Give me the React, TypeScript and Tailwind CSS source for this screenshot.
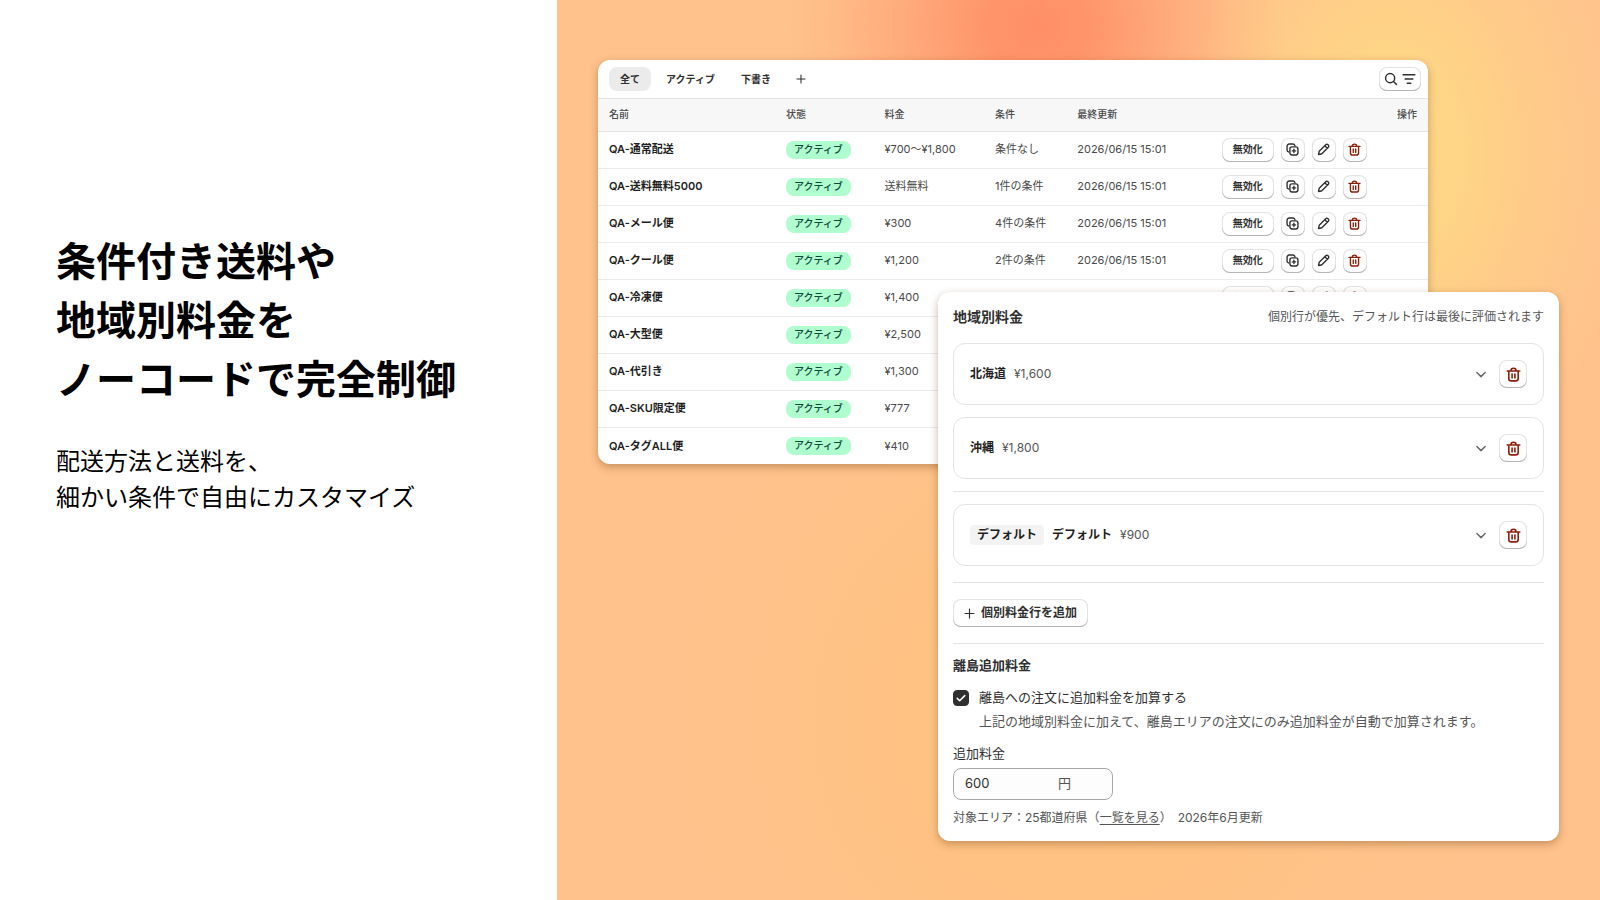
import { useState } from 'react';
import type { ReactNode } from 'react';

type Method = { name: string; rate: string; condition?: string; updated?: string };

const METHODS: Method[] = [
  { name: 'QA-通常配送', rate: '¥700〜¥1,800', condition: '条件なし', updated: '2026/06/15 15:01' },
  { name: 'QA-送料無料5000', rate: '送料無料', condition: '1件の条件', updated: '2026/06/15 15:01' },
  { name: 'QA-メール便', rate: '¥300', condition: '4件の条件', updated: '2026/06/15 15:01' },
  { name: 'QA-クール便', rate: '¥1,200', condition: '2件の条件', updated: '2026/06/15 15:01' },
  { name: 'QA-冷凍便', rate: '¥1,400' },
  { name: 'QA-大型便', rate: '¥2,500' },
  { name: 'QA-代引き', rate: '¥1,300' },
  { name: 'QA-SKU限定便', rate: '¥777' },
  { name: 'QA-タグALL便', rate: '¥410' },
];

const TABS = ['全て', 'アクティブ', '下書き'];

function Icon({ className, children }: { className: string; children: ReactNode }) {
  return (
    <svg viewBox="0 0 16 16" fill="none" stroke="currentColor" strokeWidth="1.7" strokeLinecap="round" strokeLinejoin="round" className={className} aria-hidden="true">
      {children}
    </svg>
  );
}

function TrashIcon({ className }: { className: string }) {
  return (
    <Icon className={className}>
      <path d="M1.3 4.2h13.4M5.2 4.200a2.800 2.800 0 0 1 5.600 0M3 4.200v8a2.600 2.600 0 0 0 2.600 2.600h4.800a2.600 2.600 0 0 0 2.600-2.600v-8M6.500 7.400v4.200M9.500 7.400v4.200" />
    </Icon>
  );
}

function PlusIcon({ className }: { className: string }) {
  return (
    <Icon className={className}>
      <path d="M8 1.500v13M1.500 8h13" />
    </Icon>
  );
}

function DuplicateIcon() {
  return (
    <Icon className="size-[13px]">
      <rect x="4.8" y="4.8" width="9.900" height="9.900" rx="2.600" />
      <path d="M3.200 11A2.600 2.600 0 0 1 1.300 8.500V3.900A2.600 2.600 0 0 1 3.900 1.300h4.600A2.600 2.600 0 0 1 11 3.200M9.750 7.700v4.100M7.700 9.750h4.100" />
    </Icon>
  );
}

function PencilIcon() {
  return (
    <Icon className="size-[13px]">
      <path d="M1.900 14.100l.6-3.300a2 2 0 0 1 .55-1.050l7.700-7.700a1.900 1.900 0 0 1 2.700 0l.5.5a1.900 1.900 0 0 1 0 2.700l-7.700 7.700a2 2 0 0 1-1.050.55zM9.600 3.300l3.100 3.100" />
    </Icon>
  );
}

const raised =
  'flex shrink-0 cursor-pointer items-center justify-center rounded-lg bg-white shadow-[inset_0_-1px_0_#b5b5b5,inset_0_0_0_1px_#e3e3e3]';

function IconButton({ label, className, children }: { label: string; className: string; children: ReactNode }) {
  return (
    <button type="button" aria-label={label} className={`${raised} ${className}`}>
      {children}
    </button>
  );
}

function MethodsCard() {
  const [tab, setTab] = useState('全て');
  return (
    <section className="col-start-2 col-end-4 row-start-1 self-start overflow-hidden rounded-xl bg-white shadow-[0_3px_8px_rgba(90,50,10,0.35)]">
      <div className="flex items-center border-b border-[#e3e3e3] py-[7px] pr-[7px] pl-[11px]">
        <div className="flex items-center gap-1">
          {TABS.map((t) => (
            <button
              key={t}
              type="button"
              onClick={() => setTab(t)}
              className={`h-6 cursor-pointer rounded-lg px-[11px] text-[10px] font-semibold text-[#303030] ${t === tab ? 'bg-[#ebebeb]' : ''}`}
            >
              {t}
            </button>
          ))}
          <button type="button" aria-label="ビューを追加" className="flex h-6 cursor-pointer items-center px-[10px] text-[#303030]">
            <PlusIcon className="size-[10px]" />
          </button>
        </div>
        <button type="button" aria-label="検索と絞り込み" className={`${raised} ml-auto h-6 w-[42px] gap-1 text-[#303030]`}>
          <Icon className="size-[14px]">
            <circle cx="7" cy="7" r="5.200" />
            <path d="M10.900 10.900L14.300 14.300" />
          </Icon>
          <Icon className="size-[14px]">
            <path d="M1.300 3.200h13.400M3.600 8h8.800M6 12.800h4" />
          </Icon>
        </button>
      </div>
      <table className="w-full table-fixed text-left text-[11px] text-[#4a4a4a]">
        <colgroup>
          <col className="w-[21.2%]" />
          <col className="w-[12%]" />
          <col className="w-[13.2%]" />
          <col className="w-[9.9%]" />
          <col className="w-[17.4%]" />
          <col />
        </colgroup>
        <thead className="bg-[#f7f7f7] text-[10px]">
          <tr className="h-8 border-b border-[#e3e3e3]">
            <th className="pl-[11px] font-medium">名前</th>
            <th className="pl-3 font-medium">状態</th>
            <th className="pl-[11px] font-medium">料金</th>
            <th className="pl-3 font-medium">条件</th>
            <th className="pl-3 font-medium">最終更新</th>
            <th className="pr-[11px] text-right font-medium">操作</th>
          </tr>
        </thead>
        <tbody>
          {METHODS.map((m) => (
            <tr key={m.name} className="h-[37px] border-b border-[#ebebeb] whitespace-nowrap last:border-b-0">
              <td className="pl-[11px] font-semibold text-[#1f1f1f]">{m.name}</td>
              <td className="pl-3">
                <span className="inline-flex h-[18px] items-center rounded-lg bg-[#b0fdcf] px-2 align-middle text-[10px] font-medium text-[#0c4a3a]">
                  アクティブ
                </span>
              </td>
              <td className="pl-[11px]">{m.rate}</td>
              <td className="pl-3">{m.condition}</td>
              <td className="pl-3">{m.updated}</td>
              <td className="pl-3">
                <div className="flex items-center gap-[7px] text-[#303030]">
                  <button type="button" className={`${raised} h-6 w-[52px] text-[10px] font-semibold`}>
                    無効化
                  </button>
                  <IconButton label={`${m.name}を複製`} className="size-6">
                    <DuplicateIcon />
                  </IconButton>
                  <IconButton label={`${m.name}を編集`} className="size-6">
                    <PencilIcon />
                  </IconButton>
                  <IconButton label={`${m.name}を削除`} className="size-6 text-[#8e1f0b]">
                    <TrashIcon className="size-[13px]" />
                  </IconButton>
                </div>
              </td>
            </tr>
          ))}
        </tbody>
      </table>
    </section>
  );
}

function RegionRow({ name, price, badge }: { name: string; price: string; badge?: string }) {
  return (
    <div className="flex h-[62px] items-center gap-2 rounded-xl border border-[#e3e3e3] px-4 text-[12px]">
      {badge && <span className="rounded bg-[#f3f3f3] px-[7px] leading-5 font-semibold text-[#1f1f1f]">{badge}</span>}
      <span className="font-semibold text-[#1f1f1f]">{name}</span>
      <span className="text-[#555555]">{price}</span>
      <button type="button" aria-label={`${name}を開く`} className="ml-auto cursor-pointer p-1 text-[#6a6a6a]">
        <Icon className="size-3">
          <path d="M2.500 6L8 11.500l5.500-5.500" strokeWidth="2" />
        </Icon>
      </button>
      <IconButton label={`${name}を削除`} className="size-7 text-[#8e1f0b]">
        <TrashIcon className="size-[15px]" />
      </IconButton>
    </div>
  );
}

function RegionsCard() {
  return (
    <section className="col-start-3 col-end-5 row-start-1 mt-[232px] self-start rounded-xl bg-white px-[15px] pt-[15px] pb-[14px] text-[13px] text-[#303030] shadow-[0_3px_8px_rgba(90,50,10,0.35)]">
      <header className="flex items-center justify-between leading-5">
        <h2 className="text-[14px] font-semibold">地域別料金</h2>
        <p className="text-[12px] text-[#555555]">個別行が優先、デフォルト行は最後に評価されます</p>
      </header>
      <div className="mt-4 flex flex-col gap-3">
        <RegionRow name="北海道" price="¥1,600" />
        <RegionRow name="沖縄" price="¥1,800" />
        <hr className="border-[#e3e3e3]" />
        <RegionRow name="デフォルト" price="¥900" badge="デフォルト" />
      </div>
      <hr className="my-4 border-[#e3e3e3]" />
      <button type="button" className={`${raised} h-7 gap-1.5 px-[11px] text-[12px] font-semibold`}>
        <PlusIcon className="size-[11px]" />
        個別料金行を追加
      </button>
      <hr className="mt-4 border-[#e3e3e3]" />
      <h3 className="mt-[11px] leading-5 font-semibold">離島追加料金</h3>
      <div className="mt-3 flex gap-[10px] leading-5">
        <span className="grid h-[22px] w-4 place-items-center">
          <input id="island" type="checkbox" defaultChecked className="peer col-start-1 row-start-1 size-4 appearance-none rounded border border-[#8a8a8a] checked:border-[#303030] checked:bg-[#303030]" />
          <Icon className="pointer-events-none col-start-1 row-start-1 hidden size-3 text-white peer-checked:block">
            <path d="M3 8.500l3.200 3.200L13 4.800" strokeWidth="2" />
          </Icon>
        </span>
        <div>
          <label htmlFor="island">離島への注文に追加料金を加算する</label>
          <p className="mt-1 text-[#555555]">上記の地域別料金に加えて、離島エリアの注文にのみ追加料金が自動で加算されます。</p>
        </div>
      </div>
      <label htmlFor="fee" className="mt-3 block leading-5">
        追加料金
      </label>
      <div className="mt-[5px] flex h-8 w-40 items-center rounded-lg border border-[#a8a8a8] bg-[#fdfdfd] px-[11px]">
        <input id="fee" type="text" defaultValue="600" className="w-[93px] bg-transparent outline-none" />
        <span className="text-[#555555]">円</span>
      </div>
      <p className="mt-2 text-[12px] leading-[19px] text-[#555555]">
        対象エリア：25都道府県（
        <a href="#areas" className="underline underline-offset-2">
          一覧を見る
        </a>
        ）　2026年6月更新
      </p>
    </section>
  );
}

export default function App() {
  return (
    <main
      lang="ja"
      className="grid min-h-screen grid-cols-[557fr_1043fr] bg-white font-['Inter','Noto_Sans_CJK_JP',sans-serif]"
    >
      <div className="pt-[230px] pl-14 font-['Noto_Sans_CJK_JP',sans-serif] text-black">
        <h1 className="text-[40px] leading-[59px] font-bold">
          条件付き送料や
          <br />
          地域別料金を
          <br />
          ノーコードで完全制御
        </h1>
        <p className="mt-[35px] text-[24px] leading-9">
          配送方法と送料を、
          <br />
          細かい条件で自由にカスタマイズ
        </p>
      </div>
      <div className="grid grid-cols-[41fr_340fr_490fr_131fr_41fr] bg-[#ffc28c] bg-[radial-gradient(ellipse_250px_210px_at_46%_3%,#ff8f66_0%,#ff8f66e6_20%,#ff8f6680_50%,#ff8f6626_80%,#ff8f6600_100%),radial-gradient(ellipse_240px_340px_at_80%_17%,#fed985_0%,#fed985cc_30%,#fed98566_60%,#fed98500_100%),radial-gradient(ellipse_400px_400px_at_50%_80%,#ffc27c_0%,#ffc27c00_100%)] py-[60px]">
        <MethodsCard />
        <RegionsCard />
      </div>
    </main>
  );
}
